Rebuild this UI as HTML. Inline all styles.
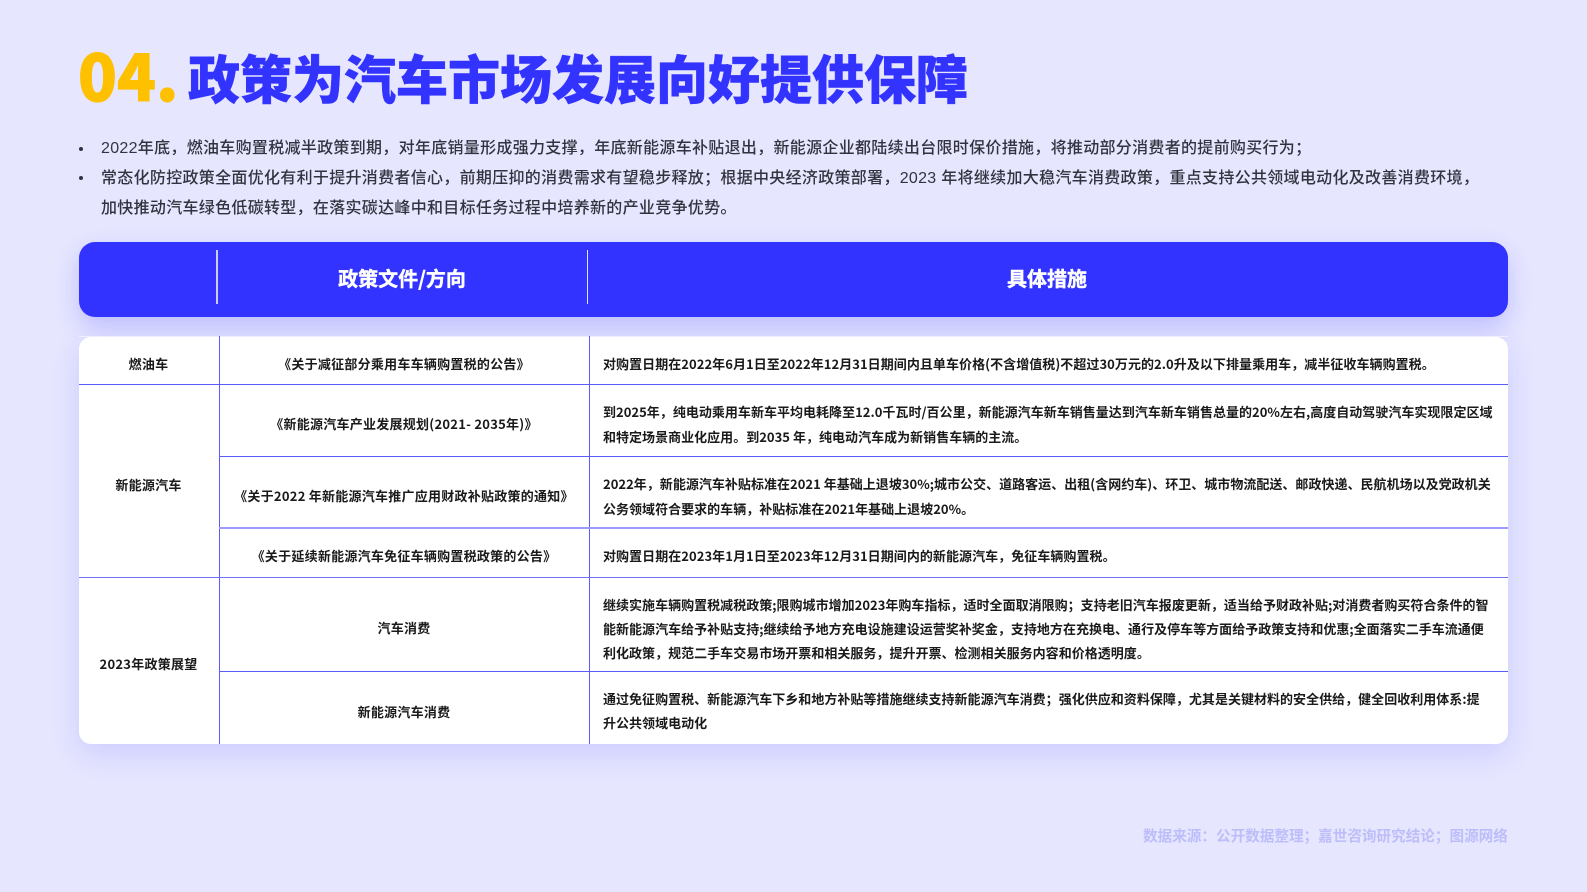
<!DOCTYPE html>
<html lang="zh-CN">
<head>
<meta charset="utf-8">
<style>
html,body{margin:0;padding:0;width:1587px;height:892px;overflow:hidden;background:#E6E6FF;}
body{position:relative;font-family:"Liberation Sans","Noto Sans CJK SC",sans-serif;}
.a{position:absolute;white-space:nowrap;}
.b{position:absolute;white-space:nowrap;line-height:20px;height:20px;font-size:16px;letter-spacing:.3px;color:#33333f;left:101px;font-weight:500;}
.dot{position:absolute;width:4px;height:4px;border-radius:50%;background:#33333f;left:79px;}
.t{position:absolute;white-space:nowrap;line-height:20px;height:20px;font-family:"Noto Sans CJK SC",sans-serif;font-size:13px;font-weight:700;color:#1a1a1a;letter-spacing:.02px;}
.c{transform:translateX(-50%);letter-spacing:.25px;}
.h{position:absolute;background:#5b5bff;height:1px;}
.v{position:absolute;background:#5b5bff;width:1px;}
</style>
</head>
<body>
<div class="a" style="left:78px;top:29px;font:900 64px/90px 'Noto Sans CJK SC',sans-serif;color:#FFC000;-webkit-text-stroke:1px #FFC000;">04.</div>
<div class="a" style="left:188px;top:38px;font:900 52px/78px 'Noto Sans CJK SC',sans-serif;color:#3333FF;-webkit-text-stroke:.5px #3333FF;">政策为汽车市场发展向好提供保障</div>

<div class="dot" style="top:147px"></div>
<div class="dot" style="top:176px"></div>
<div class="b" style="top:138.5px;">2022年底，燃油车购置税减半政策到期，对年底销量形成强力支撑，年底新能源车补贴退出，新能源企业都陆续出台限时保价措施，将推动部分消费者的提前购买行为；</div>
<div class="b" style="top:169px;">常态化防控政策全面优化有利于提升消费者信心，前期压抑的消费需求有望稳步释放；根据中央经济政策部署，2023 年将继续加大稳汽车消费政策，重点支持公共领域电动化及改善消费环境，</div>
<div class="b" style="top:199px;">加快推动汽车绿色低碳转型，在落实碳达峰中和目标任务过程中培养新的产业竞争优势。</div>

<div class="a" style="left:79px;top:242px;width:1429px;height:75px;border-radius:16px;background:#3333FF;box-shadow:0 10px 24px rgba(51,51,255,.22);"></div>
<div class="a" style="left:216px;top:250px;width:1.5px;height:54px;background:rgba(255,255,255,.75);"></div>
<div class="a" style="left:587px;top:250px;width:1px;height:54px;background:rgba(255,255,255,.85);"></div>
<div class="a c" style="left:402px;top:263px;font:700 20px/30px 'Noto Sans CJK SC',sans-serif;color:#fff;-webkit-text-stroke:.4px #fff;letter-spacing:0;">政策文件/方向</div>
<div class="a c" style="left:1047px;top:263px;font:700 20px/30px 'Noto Sans CJK SC',sans-serif;color:#fff;-webkit-text-stroke:.4px #fff;letter-spacing:0;">具体措施</div>

<div class="a" style="left:79px;top:335.5px;width:1429px;height:1px;background:#f4f4ff;"></div>
<div class="a" style="left:79px;top:336.5px;width:1429px;height:407.5px;border-radius:12px;background:#fff;box-shadow:0 10px 30px rgba(51,51,255,.14);"></div>

<div class="v" style="left:219px;top:336px;height:408px;"></div>
<div class="v" style="left:589px;top:336px;height:408px;"></div>
<div class="h" style="left:79px;top:384px;width:1429px;"></div>
<div class="h" style="left:219px;top:456px;width:1289px;"></div>
<div class="h" style="left:219px;top:527px;width:1289px;height:2px;background:#9a9aff;"></div>
<div class="h" style="left:79px;top:577px;width:1429px;background:#7272f5;"></div>
<div class="h" style="left:219px;top:671px;width:1289px;"></div>

<div class="t c" style="left:148.5px;top:353.5px;">燃油车</div>
<div class="t c" style="left:148.5px;top:474.5px;">新能源汽车</div>
<div class="t c" style="left:148.5px;top:654px;">2023年政策展望</div>

<div class="t c" style="left:404px;top:353.5px;">《关于减征部分乘用车车辆购置税的公告》</div>
<div class="t c" style="left:404px;top:414px;">《新能源汽车产业发展规划(2021- 2035年)》</div>
<div class="t c" style="left:404px;top:486px;">《关于2022 年新能源汽车推广应用财政补贴政策的通知》</div>
<div class="t c" style="left:404px;top:546px;">《关于延续新能源汽车免征车辆购置税政策的公告》</div>
<div class="t c" style="left:404px;top:618px;">汽车消费</div>
<div class="t c" style="left:404px;top:701.5px;">新能源汽车消费</div>

<div class="t" style="left:603px;top:353.5px;letter-spacing:.05px;">对购置日期在2022年6月1日至2022年12月31日期间内且单车价格(不含增值税)不超过30万元的2.0升及以下排量乘用车，减半征收车辆购置税。</div>
<div class="t" style="left:603px;top:402px;">到2025年，纯电动乘用车新车平均电耗降至12.0千瓦时/百公里，新能源汽车新车销售量达到汽车新车销售总量的20%左右,高度自动驾驶汽车实现限定区域</div>
<div class="t" style="left:603px;top:426.5px;">和特定场景商业化应用。到2035 年，纯电动汽车成为新销售车辆的主流。</div>
<div class="t" style="left:603px;top:474px;">2022年，新能源汽车补贴标准在2021 年基础上退坡30%;城市公交、道路客运、出租(含网约车)、环卫、城市物流配送、邮政快递、民航机场以及党政机关</div>
<div class="t" style="left:603px;top:498.5px;">公务领域符合要求的车辆，补贴标准在2021年基础上退坡20%。</div>
<div class="t" style="left:603px;top:546px;letter-spacing:.05px;">对购置日期在2023年1月1日至2023年12月31日期间内的新能源汽车，免征车辆购置税。</div>
<div class="t" style="left:603px;top:594.5px;">继续实施车辆购置税减税政策;限购城市增加2023年购车指标，适时全面取消限购；支持老旧汽车报废更新，适当给予财政补贴;对消费者购买符合条件的智</div>
<div class="t" style="left:603px;top:618.5px;">能新能源汽车给予补贴支持;继续给予地方充电设施建设运营奖补奖金，支持地方在充换电、通行及停车等方面给予政策支持和优惠;全面落实二手车流通便</div>
<div class="t" style="left:603px;top:642.5px;">利化政策，规范二手车交易市场开票和相关服务，提升开票、检测相关服务内容和价格透明度。</div>
<div class="t" style="left:603px;top:689px;">通过免征购置税、新能源汽车下乡和地方补贴等措施继续支持新能源汽车消费；强化供应和资料保障，尤其是关键材料的安全供给，健全回收利用体系:提</div>
<div class="t" style="left:603px;top:713px;">升公共领域电动化</div>

<div class="a" style="left:1143px;top:826px;font:700 14.6px/20px 'Noto Sans CJK SC',sans-serif;color:#BDBDFA;">数据来源：公开数据整理；嘉世咨询研究结论；图源网络</div>
</body>
</html>
